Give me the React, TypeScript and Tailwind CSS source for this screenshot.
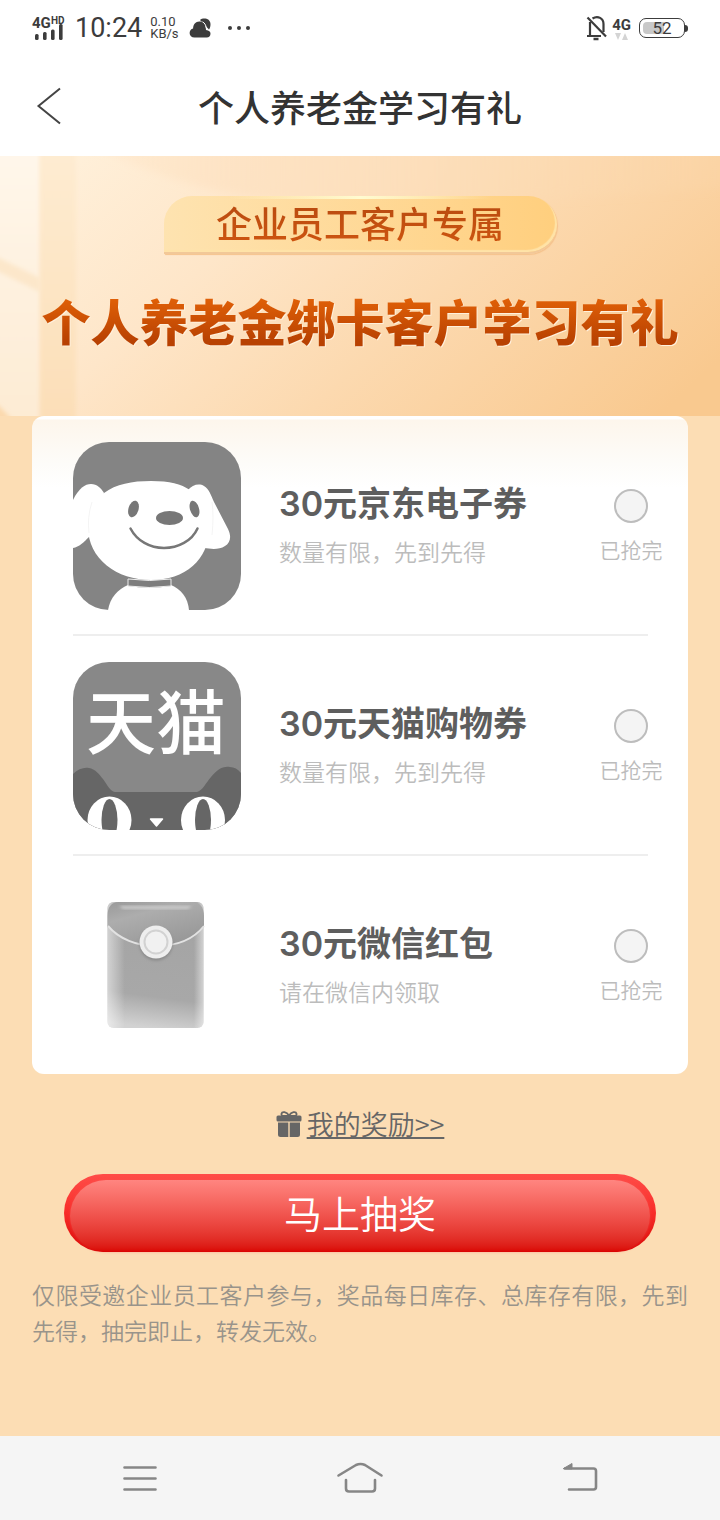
import type { ReactNode } from "react";

function SignalIcon() {
  return (
    <svg viewBox="0 0 38 28" className="h-7 w-[38px]" aria-hidden="true">
      <g fill="#3c3c3c">
        <rect x="5" y="20" width="3.6" height="6" rx="1.5" />
        <rect x="13" y="18" width="3.6" height="8" rx="1.5" />
        <rect x="21" y="15.500" width="3.600" height="10.500" rx="1.500" />
        <rect x="29" y="10" width="3.6" height="16" rx="1.5" />
      </g>
      <text x="2" y="14" fontFamily="Roboto, sans-serif" fontSize="15" fontWeight="700" fill="#3c3c3c">4G</text>
      <text x="21" y="9.500" fontFamily="Roboto, sans-serif" fontSize="10" fontWeight="700" fill="#3c3c3c">HD</text>
    </svg>
  );
}

function CloudIcon() {
  return (
    <svg viewBox="0 0 22 20" className="h-5 w-[22px]" aria-hidden="true">
      <path d="M11 2C14 -.5 21.500 0 21.500 6.500c0 2-.6 3.800-1.500 5z" fill="#3c3c3c" />
      <path
        d="M5.500 19.500C2.500 19.500.6 17.500.6 15c0-2.300 1.500-4 3.500-4.500C4.100 6.500 6.600 3.400 10.300 3.400c3.400 0 5.800 2.300 6.400 5.600l.3 3c3 .2 4.500 1.700 4.500 3.800 0 2.200-1.500 3.700-3.700 3.700z"
        fill="#3c3c3c"
      />
      <path d="M13.500 3.800c2.200 1.200 3.400 3.200 3.700 6" fill="none" stroke="#fff" strokeWidth="1" />
    </svg>
  );
}

function BellOffIcon() {
  return (
    <svg viewBox="0 0 22 26" className="h-[26px] w-[22px]" fill="none" stroke="#3c3c3c" strokeWidth="2.200" aria-hidden="true">
      <path d="M4 7v13.500M1 21h14M6.500 3.500C12 0 17.500 3.500 17.500 9v8" />
      <path d="M1.500 2.500 20 21.500" />
      <path d="M7.500 24h5" strokeWidth="2.500" />
    </svg>
  );
}

function StatusBar() {
  return (
    <div className="flex h-14 items-center justify-between pr-8 pl-[30px] font-[Roboto,sans-serif] text-[#3c3c3c]">
      <div className="flex items-center">
        <SignalIcon />
        <span className="ml-[7px] text-[27px] leading-8">10:24</span>
        <span className="ml-2 flex flex-col text-[13px] leading-3">
          <span>0.10</span>
          <span>KB/s</span>
        </span>
        <span className="ml-[10px]">
          <CloudIcon />
        </span>
        <svg viewBox="0 0 24 6" className="ml-4 h-[6px] w-6" fill="#3c3c3c" aria-hidden="true">
          <circle cx="3" cy="3" r="2" />
          <circle cx="12" cy="3" r="2" />
          <circle cx="21" cy="3" r="2" />
        </svg>
      </div>
      <div className="flex items-center">
        <BellOffIcon />
        <span className="ml-1 flex flex-col items-center">
          <span className="text-[15px] leading-4 font-bold">4G</span>
          <svg viewBox="0 0 14 7" className="h-[7px] w-[14px]" fill="#d4d4d4" aria-hidden="true">
            <path d="M0 0h6L3 7zM7 7h6L10 0z" />
          </svg>
        </span>
        <span className="relative ml-2 flex h-5 w-[46px] items-center justify-center rounded-[7px] border border-[#3c3c3c]">
          <span className="absolute top-[3px] bottom-[3px] left-[3px] w-[21px] rounded-l-[4px] bg-[#c8c8c8]" />
          <span className="relative text-[17px] leading-5">52</span>
        </span>
        <span className="h-[7px] w-[3px] rounded-r bg-[#3c3c3c]" />
      </div>
    </div>
  );
}

function Header() {
  return (
    <header className="grid h-25 grid-cols-[96px_1fr_96px] items-center">
      <button type="button" aria-label="返回" className="ml-9 w-7">
        <svg viewBox="0 0 26 40" className="h-10 w-[26px]" fill="none" stroke="#444" strokeWidth="2" aria-hidden="true">
          <path d="M24 2.500 2.500 20 24 37.500" />
        </svg>
      </button>
      <h1 className="text-center text-4xl font-medium text-[#333]">个人养老金学习有礼</h1>
    </header>
  );
}

function HeroBackdrop() {
  return (
    <svg viewBox="0 0 720 260" preserveAspectRatio="none" className="absolute inset-0 h-full w-full" aria-hidden="true">
      <defs>
        <linearGradient id="heroBase" gradientUnits="userSpaceOnUse" x1="60" y1="0" x2="460" y2="440">
          <stop offset="0" stopColor="#fff0da" />
          <stop offset="0.3" stopColor="#fee6c9" />
          <stop offset="0.6" stopColor="#fcd9af" />
          <stop offset="1" stopColor="#f9c98f" />
        </linearGradient>
        <linearGradient id="heroBeam" x1="0" y1="0" x2="0" y2="1">
          <stop offset="0" stopColor="#feecd2" />
          <stop offset="1" stopColor="#fcdeb7" />
        </linearGradient>
        <linearGradient id="heroPane" x1="0" y1="0" x2="0" y2="1">
          <stop offset="0" stopColor="#fff7eb" />
          <stop offset="1" stopColor="#fdebd3" />
        </linearGradient>
        <linearGradient id="heroSky" x1="0" y1="0" x2="1" y2="0">
          <stop offset="0" stopColor="#fde0bf" stopOpacity="0.2" />
          <stop offset="0.3" stopColor="#fde0bf" stopOpacity="0.8" />
          <stop offset="1" stopColor="#fbd6a8" stopOpacity="0.3" />
        </linearGradient>
        <filter id="heroSoft" x="-20%" y="-20%" width="140%" height="140%">
          <feGaussianBlur stdDeviation="2" />
        </filter>
        <filter id="heroHaze" x="-20%" y="-50%" width="140%" height="200%">
          <feGaussianBlur stdDeviation="5" />
        </filter>
      </defs>
      <rect width="720" height="260" fill="url(#heroBase)" />
      <path d="M95-10h640v40Q480 50 290 46 180 36 95-10z" fill="url(#heroSky)" filter="url(#heroHaze)" />
      <path d="M-10-10h50v280h-50z" fill="url(#heroPane)" filter="url(#heroSoft)" />
      <path d="M-5 100 40 122v14L-5 114z" fill="#fce7ca" filter="url(#heroSoft)" />
      <path d="M40-10h36v280H40z" fill="url(#heroBeam)" filter="url(#heroSoft)" />
      <path d="M-6 246q6 4 20 20H-6z" fill="#fbd9ae" filter="url(#heroSoft)" />
    </svg>
  );
}

function Hero() {
  return (
    <section className="relative flex h-65 flex-col items-center overflow-hidden pt-10">
      <HeroBackdrop />
      <div className="relative flex h-[58px] w-[393px] items-center justify-center rounded-tl-[28px] rounded-r-[29px] border-b-2 border-[#f2c898] bg-linear-to-r from-[#fee3b0] to-[#ffcf7e] pb-1 shadow-[inset_-2px_-2px_1px_#ffe3a8,1px_1px_1px_#f5c28c]">
        <span className="absolute inset-x-16 top-0 h-[3px] bg-linear-to-r from-transparent via-[#fffbd0] to-transparent" />
        <span className="bg-linear-to-b from-[#b84a10] to-[#cc5410] bg-clip-text text-4xl font-medium text-transparent">
          企业员工客户专属
        </span>
      </div>
      <h2 className="relative mt-[30px] bg-linear-to-b from-[#e06008] from-20% to-[#b84102] to-80% bg-clip-text text-[49px] leading-[72px] font-black whitespace-nowrap text-transparent drop-shadow-[1px_1px_0_#fff0dc]">
        个人养老金绑卡客户学习有礼
      </h2>
    </section>
  );
}

function DogIcon() {
  return (
    <svg viewBox="0 0 168 168" className="size-42 shrink-0 rounded-[36px]" aria-hidden="true">
      <rect width="168" height="168" fill="#848484" />
      <path d="M35 168c2-12 10-21 20-25h43c10 4 17 13 18 25z" fill="#fff" />
      <path d="M55 137q22 3 43 0v7q-22 3-43 0z" fill="#7d7d7d" stroke="#eee" strokeWidth="1" />
      <path d="M0 58C6 46 12 42 18 42c6 0 10 4 13 9l-15 44C11 100 6 105 0 106z" fill="#fff" />
      <path d="M115 48c4-5 11-7 16-4 5 3 7 9 10 16l14 27c4 8 2 14-3 17-6 4-14 3-21 2z" fill="#fff" />
      <path d="M31 51c12-9 28-12 47-12s30 3 39 9c12 8 19 21 19 38 0 32-24 52-58 52S15 117 15 85c0-15 6-27 16-34z" fill="#fff" />
      <path d="M19 60q-5 15-3 31M139 60q2 14 0 33" fill="none" stroke="#f4f4f4" strokeWidth="1" />
      <ellipse cx="60.500" cy="67" rx="5" ry="8.500" fill="#777" transform="rotate(17 60.500 67)" />
      <ellipse cx="121.500" cy="67" rx="4.500" ry="8.500" fill="#777" transform="rotate(-17 121.500 67)" />
      <ellipse cx="96.500" cy="76" rx="13.500" ry="7" fill="#777" />
      <path d="M57.500 86.500C64 99 77 106 91 106s28-7 33.500-19.500" fill="none" stroke="#777" strokeWidth="2.500" strokeLinecap="round" />
    </svg>
  );
}

function CatIcon() {
  return (
    <svg viewBox="0 0 168 168" className="size-42 shrink-0 rounded-[36px]" role="img" aria-label="天猫">
      <rect width="168" height="168" fill="#888" />
      <text x="83" y="87" textAnchor="middle" fontFamily="'Noto Sans CJK SC', sans-serif" fontSize="70" fontWeight="500" fill="#fff">
        天猫
      </text>
      <path d="M0 168v-56c5-5 11-7 16-6 6 1 10 6 14 11 5 7 7 12 12 13h82c5-1 9-9 14-15 6-7 11-11 19-10 4 0 8 2 11 6v57z" fill="#666" />
      <ellipse cx="36.500" cy="158" rx="22" ry="23.500" fill="#fff" />
      <ellipse cx="130" cy="158" rx="22" ry="23.500" fill="#fff" />
      <ellipse cx="36.500" cy="158" rx="8" ry="21" fill="#666" />
      <ellipse cx="130" cy="158" rx="8" ry="21" fill="#666" />
      <path d="M77.500 157h12l-6 7z" fill="#fff" stroke="#fff" strokeWidth="1.500" strokeLinejoin="round" />
    </svg>
  );
}

function EnvelopeIcon() {
  return (
    <svg viewBox="0 0 168 168" className="size-42 shrink-0" aria-hidden="true">
      <defs>
        <linearGradient id="envSide" x1="0" x2="1" y1="0" y2="0">
          <stop offset="0" stopColor="#fff" stopOpacity="0.5" />
          <stop offset="0.18" stopColor="#fff" stopOpacity="0" />
          <stop offset="0.9" stopColor="#fff" stopOpacity="0" />
          <stop offset="1" stopColor="#fff" stopOpacity="0.5" />
        </linearGradient>
        <linearGradient id="envBody" x1="0.55" x2="0.45" y1="0" y2="1">
          <stop offset="0" stopColor="#a3a3a3" />
          <stop offset="0.75" stopColor="#a8a8a8" />
          <stop offset="1" stopColor="#d2d2d2" />
        </linearGradient>
        <linearGradient id="envFlap" x1="0" x2="0.6" y1="0" y2="1">
          <stop offset="0" stopColor="#999" />
          <stop offset="0.35" stopColor="#adadad" />
          <stop offset="1" stopColor="#989898" />
        </linearGradient>
        <filter id="envBlur" x="-30%" y="-30%" width="160%" height="160%">
          <feGaussianBlur stdDeviation="1.5" />
        </filter>
      </defs>
      <rect x="34.500" y="20" width="96" height="126" rx="6" fill="url(#envBody)" />
      <rect x="34.500" y="20" width="96" height="126" rx="6" fill="url(#envSide)" />
      <path d="M34.500 34c0-9 4-14 11-14h74c7 0 11.500 5 11.500 14v11C116 58 102 64 83 64S48 58 34.500 45z" fill="url(#envFlap)" />
      <path d="M46 24h73l-4 3H50z" fill="#ccc" filter="url(#envBlur)" />
      <path d="M35 44c11 13 29 20 48 20s37-6 48-20" fill="none" stroke="#e2e2e2" strokeWidth="2" />
      <circle cx="83" cy="62" r="16.500" fill="#888" filter="url(#envBlur)" />
      <circle cx="83" cy="60" r="16.500" fill="#eee" />
      <circle cx="83" cy="60" r="11.500" fill="#f1f1f1" stroke="#d2d2d2" strokeWidth="2" />
    </svg>
  );
}

type Prize = { id: string; title: string; note: string; icon: ReactNode };

const prizes: Prize[] = [
  { id: "jd", title: "30元京东电子券", note: "数量有限，先到先得", icon: <DogIcon /> },
  { id: "tmall", title: "30元天猫购物券", note: "数量有限，先到先得", icon: <CatIcon /> },
  { id: "wechat", title: "30元微信红包", note: "请在微信内领取", icon: <EnvelopeIcon /> },
];

function PrizeRow({ prize }: { prize: Prize }) {
  return (
    <li className="mr-10 ml-[41px] flex items-center border-b-2 border-[#eee] pt-[26px] pb-6 last:border-b-0">
      {prize.icon}
      <div className="ml-[38px] flex flex-1 flex-col pb-1">
        <label
          htmlFor={prize.id}
          className="font-[Inter,'Noto_Sans_CJK_SC',sans-serif] text-[34px] leading-[54px] font-semibold text-[#5e5e5e]"
        >
          {prize.title}
        </label>
        <span className="text-[23px] leading-10 font-[350] text-[#bcbcbc]">{prize.note}</span>
      </div>
      <div className="flex w-[34px] flex-col items-center pb-1">
        <input
          id={prize.id}
          type="radio"
          name="prize"
          disabled
          className="mt-[10px] size-[34px] appearance-none rounded-full border-2 border-[#bdbdbd] bg-[#f4f4f4]"
        />
        <span className="mt-[6px] text-[21px] leading-10 font-[350] whitespace-nowrap text-[#bcbcbc]">已抢完</span>
      </div>
    </li>
  );
}

function GiftIcon() {
  return (
    <svg viewBox="0 0 26 26" className="size-[26px]" aria-hidden="true">
      <path d="M13 4.500C10.500.5 6 .3 5.500 2.800c-.2 1.200.5 2 1.500 2h12c1 0 1.700-.8 1.500-2C20 .3 15.500.5 13 4.500z" fill="none" stroke="#666" strokeWidth="1.800" />
      <path d="M2 4.500h22q1.500 0 1.500 1.500v3q0 1.500-1.500 1.500H2Q.5 10.500.5 9V6Q.5 4.500 2 4.500z" fill="#666" />
      <path d="M2 11.500h10.300V26H4.500Q2 26 2 23.500zM13.700 11.500H24v12q0 2.500-2.500 2.500h-7.800z" fill="#666" />
    </svg>
  );
}

function NavBar() {
  return (
    <nav className="grid h-21 grid-cols-[280px_1fr_280px] items-center bg-[#f5f5f5] text-[#868686]">
      <button type="button" aria-label="菜单" className="flex justify-center">
        <svg viewBox="0 0 34 34" className="size-[34px]" stroke="currentColor" strokeWidth="2.600" strokeLinecap="round" aria-hidden="true">
          <path d="M1.500 6.500h31M1.500 17.500h31M1.500 28.500h31" />
        </svg>
      </button>
      <button type="button" aria-label="主页" className="flex justify-center">
        <svg viewBox="0 0 48 34" className="h-[34px] w-12" fill="none" stroke="currentColor" strokeWidth="2.600" strokeLinecap="round" strokeLinejoin="round" aria-hidden="true">
          <path d="M2.500 14.500 20 4q4.500-2 9 0l16.500 10.500" />
          <path d="M10 19v8.500q0 3 3 3h23q3 0 3-3V19" />
        </svg>
      </button>
      <button type="button" aria-label="后退" className="flex justify-center">
        <svg viewBox="0 0 36 34" className="h-[34px] w-9" fill="none" stroke="currentColor" strokeWidth="2.600" strokeLinecap="round" strokeLinejoin="round" aria-hidden="true">
          <path d="M3 7.500h28.500q2.500 0 2.500 2.500v16q0 2.500-2.500 2.500H7" />
          <path d="M1.500 7.500 10 2.500v5z" fill="currentColor" strokeWidth="1" />
        </svg>
      </button>
    </nav>
  );
}

export default function App() {
  return (
    <div className="flex min-h-screen flex-col bg-white font-['Noto_Sans_CJK_SC',sans-serif]">
      <StatusBar />
      <Header />
      <main className="flex-1 bg-[#fcddb4]">
        <Hero />
        <ul className="mx-8 rounded-xl bg-[linear-gradient(#fff_3px,#fdf6ec_4px,#fdfcf9_48px,#fff_72px)]">
          {prizes.map((prize) => (
            <PrizeRow key={prize.id} prize={prize} />
          ))}
        </ul>
        <div className="flex flex-col items-stretch px-8 pt-8">
          <a href="#rewards" className="flex items-center gap-[5px] self-center text-[#666]">
            <GiftIcon />
            <span className="text-[27px] leading-9 font-[350] underline decoration-2 underline-offset-2">我的奖励&gt;&gt;</span>
          </a>
          <button
            type="button"
            className="mx-8 mt-8 rounded-full bg-linear-to-b from-[#ff4c48] via-[#f82c28] to-[#d80000] text-white"
          >
            <span className="m-[6px] mb-0 flex h-[72px] items-center justify-center rounded-full bg-linear-to-b from-[#ff8580] via-[#f0524c] to-[#da0200] pb-2 text-[38px] leading-none font-[350] shadow-[0_0_3px_#f8605c66]">
              马上抽奖
            </span>
          </button>
          <p className="mt-6 pb-20 text-justify text-[23px] leading-9 font-[350] text-[#99948b]">
            仅限受邀企业员工客户参与，奖品每日库存、总库存有限，先到先得，抽完即止，转发无效。
          </p>
        </div>
      </main>
      <NavBar />
    </div>
  );
}
